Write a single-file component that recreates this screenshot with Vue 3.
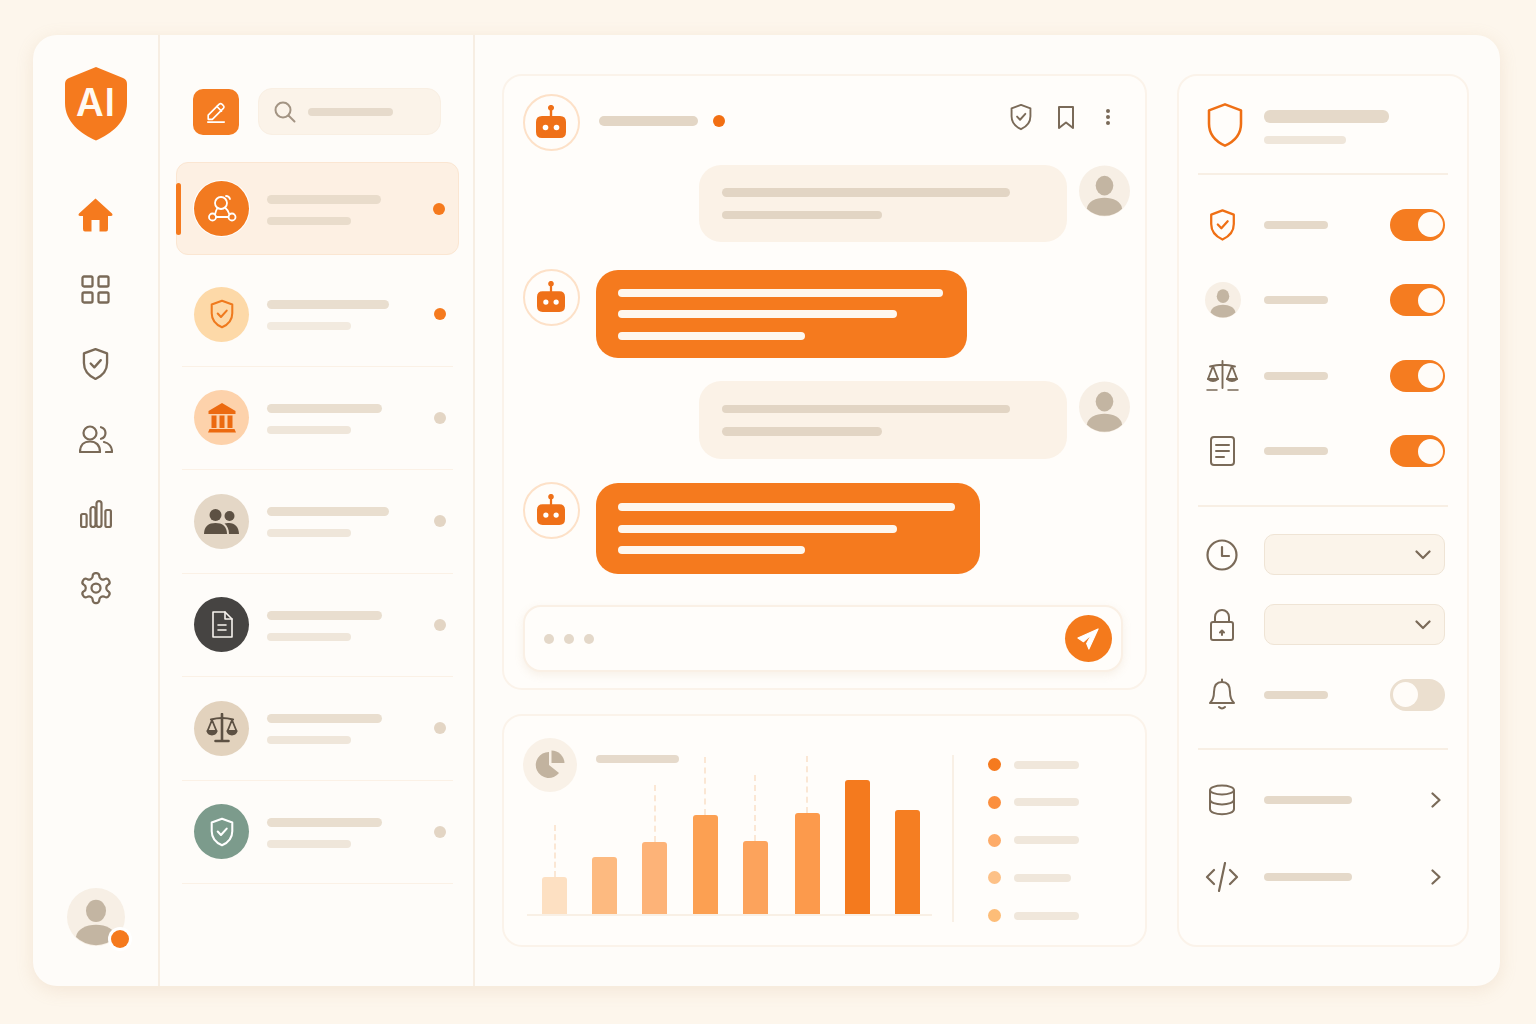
<script setup>
const navIcons = [
  { name: 'home', w: 35, h: 34 },
  { name: 'grid', w: 30, h: 30 },
  { name: 'shield-check', w: 27, h: 34 },
  { name: 'users', w: 34, h: 28 },
  { name: 'bars', w: 32, h: 28 },
  { name: 'gear', w: 36, h: 36 },
]

const conversations = [
  { icon: 'shield-check', w: 24, h: 30, bg: '#fdd9a8', color: '#ef7a1e', first: 122, dot: '#f57a1e', light: true },
  { icon: 'bank', w: 28, h: 30, bg: '#fdd2ab', color: '#ec6a10', first: 115, dot: '#e3d5c4', light: false },
  { icon: 'group', w: 35, h: 27, bg: '#e4d7c6', color: '#5d5143', first: 122, dot: '#e3d5c4', light: false },
  { icon: 'doc', w: 22, h: 27, bg: '#464442', color: '#f7f3ee', first: 115, dot: '#e3d5c4', light: false },
  { icon: 'scales', w: 32, h: 30, bg: '#e2d2bd', color: '#5d5143', first: 115, dot: '#e3d5c4', light: false },
  { icon: 'shield-check', w: 24, h: 30, bg: '#7c9b8c', color: '#ffffff', first: 115, dot: '#e3d5c4', light: false },
]

const messages = [
  { from: 'user', top: 14, h: 77, lines: [288, 160] },
  { from: 'bot', top: 28, h: 88, w: 371, lines: [325, 279, 187] },
  { from: 'user', top: 23, h: 78, lines: [288, 160] },
  { from: 'bot', top: 24, h: 91, w: 384, lines: [337, 279, 187] },
]

const bars = [
  { h: 37, color: '#fde0c2', dash: 52 },
  { h: 57, color: '#fdba80', dash: 0 },
  { h: 72, color: '#fdb378', dash: 57 },
  { h: 99, color: '#fca052', dash: 58 },
  { h: 73, color: '#fca35c', dash: 66 },
  { h: 101, color: '#fc9a4c', dash: 57 },
  { h: 134, color: '#f47a1e', dash: 0 },
  { h: 104, color: '#f57e22', dash: 0 },
]

const legend = [
  { color: '#f57a1e', w: 65 },
  { color: '#fb8f3e', w: 65 },
  { color: '#fdab68', w: 65 },
  { color: '#fdc187', w: 57 },
  { color: '#fdbd78', w: 65 },
]

const toggles = [
  { icon: 'shield-check', w: 27, h: 32, color: '#ef6f14' },
  { icon: 'person', w: 36, h: 36, color: '#7a6a58' },
  { icon: 'scales-thin', w: 33, h: 32, color: '#7a6a58' },
  { icon: 'doc-lines', w: 25, h: 30, color: '#7a6a58' },
]

const links = [
  { icon: 'database', w: 28, h: 32 },
  { icon: 'code', w: 34, h: 30 },
]
</script>

<template>
  <svg class="defs" aria-hidden="true">
    <symbol id="i-home" viewBox="0 0 35 34">
      <path fill="currentColor" d="M17.5 .5 34 15.5Q35.5 18 32.5 18H30V31Q30 33.5 28 33.5H21.5V22H13.5V33.5H7Q5 33.5 5 31V18H2.5Q-.5 18 1 15.5Z" />
    </symbol>
    <symbol id="i-grid" viewBox="0 0 30 30">
      <g fill="none" stroke="currentColor" stroke-width="2.3">
        <rect x="1.5" y="1.5" width="10" height="10" rx="1.5" />
        <rect x="17.5" y="1.5" width="10" height="10" rx="1.5" />
        <rect x="1.5" y="17.5" width="10" height="10" rx="1.5" />
        <rect x="17.5" y="17.5" width="10" height="10" rx="1.5" />
      </g>
    </symbol>
    <symbol id="i-shield-check" viewBox="0 0 28 34">
      <g fill="none" stroke="currentColor" stroke-width="2.4" stroke-linejoin="round" stroke-linecap="round">
        <path d="M14 1.5 26 6V16C26 24 20.5 29.5 14 32.5 7.5 29.5 2 24 2 16V6Z" />
        <path d="M9 16.5 12.8 20.5 19.5 13" />
      </g>
    </symbol>
    <symbol id="i-shield" viewBox="1 .5 26 33">
      <path fill="none" stroke="currentColor" stroke-width="1.9" stroke-linejoin="round" d="M14 1.5 26 6V16C26 24 20.5 29.5 14 32.5 7.5 29.5 2 24 2 16V6Z" />
    </symbol>
    <symbol id="i-users" viewBox="0 0 34 28">
      <g fill="none" stroke="currentColor" stroke-width="2.2" stroke-linecap="round" stroke-linejoin="round">
        <circle cx="11" cy="8" r="6.5" />
        <path d="M1 27C1 20 5 16.5 11 16.5S21 20 21 27Z" />
        <path d="M22 2.2A6 6 0 0 1 22 13.8" />
        <path d="M25 17C30 18 33 22 33 27H27" />
      </g>
    </symbol>
    <symbol id="i-bars" viewBox="0 0 32 28">
      <g fill="none" stroke="currentColor" stroke-width="2.2">
        <rect x="1.1" y="14" width="5.5" height="13" rx="1.5" />
        <rect x="10.5" y="7" width="5" height="20" rx="2.5" />
        <rect x="16.5" y="1.1" width="5" height="25.9" rx="2.5" />
        <rect x="25.4" y="10" width="5.5" height="17" rx="1.5" />
      </g>
    </symbol>
    <symbol id="i-gear" viewBox="0 0 24 24">
      <g fill="none" stroke="currentColor" stroke-width="1.5" stroke-linejoin="round">
        <path d="M12.22 2h-.44a2 2 0 0 0-2 2v.18a2 2 0 0 1-1 1.73l-.43.25a2 2 0 0 1-2 0l-.15-.08a2 2 0 0 0-2.73.73l-.22.38a2 2 0 0 0 .73 2.73l.15.1a2 2 0 0 1 1 1.72v.51a2 2 0 0 1-1 1.74l-.15.09a2 2 0 0 0-.73 2.73l.22.38a2 2 0 0 0 2.73.73l.15-.08a2 2 0 0 1 2 0l.43.25a2 2 0 0 1 1 1.73V20a2 2 0 0 0 2 2h.44a2 2 0 0 0 2-2v-.18a2 2 0 0 1 1-1.73l.43-.25a2 2 0 0 1 2 0l.15.08a2 2 0 0 0 2.73-.73l.22-.39a2 2 0 0 0-.73-2.73l-.15-.08a2 2 0 0 1-1-1.74v-.5a2 2 0 0 1 1-1.74l.15-.09a2 2 0 0 0 .73-2.73l-.22-.38a2 2 0 0 0-2.73-.73l-.15.08a2 2 0 0 1-2 0l-.43-.25a2 2 0 0 1-1-1.73V4a2 2 0 0 0-2-2z" />
        <circle cx="12" cy="12" r="3" />
      </g>
    </symbol>
    <symbol id="i-bot" viewBox="0 0 30 33">
      <path fill="currentColor" d="M6 11H13.8V5.6A3 3 0 1 1 16.2 5.6V11H24Q30 11 30 17V27Q30 33 24 33H6Q0 33 0 27V17Q0 11 6 11Z" />
      <circle cx="9.5" cy="22.5" r="2.8" fill="#fff" />
      <circle cx="20.5" cy="22.5" r="2.8" fill="#fff" />
    </symbol>
    <symbol id="i-person" viewBox="0 0 52 52">
      <circle cx="26" cy="26" r="26" fill="#f7efe5" />
      <ellipse cx="26" cy="20.5" rx="9" ry="10" fill="#c3b5a2" />
      <path fill="#c3b5a2" d="M8 44C9 37 17 33 26 33S43 37 44 44A26 26 0 0 1 8 44Z" />
    </symbol>
    <symbol id="i-bank" viewBox="0 0 28 30">
      <path fill="currentColor" d="M14 0 27.5 8V11H.5V8ZM3.500 12.500H8.500V25H3.500ZM11.500 12.500H16.500V25H11.500ZM19.500 12.500H24.500V25H19.500ZM1.500 26H26.500L28 29.500H0Z" />
    </symbol>
    <symbol id="i-group" viewBox="0 0 35 27">
      <g fill="currentColor">
        <circle cx="11.5" cy="7" r="6" />
        <path d="M0 26C0 18 5 15 11.5 15S23 18 23 26Z" />
        <circle cx="25.5" cy="8" r="5" />
        <path d="M24 15C30.5 14.5 35 19 35 26H25C25 21 23 17.5 20.5 15.5Q22 15 24 15Z" />
      </g>
    </symbol>
    <symbol id="i-doc" viewBox="0 0 22 27">
      <g fill="none" stroke="currentColor" stroke-width="1.6" stroke-linejoin="round" stroke-linecap="round">
        <path d="M2 1H14L21 8V26H2Z" />
        <path d="M14 1V8H21" />
        <path d="M7 14H15M7 19H15" />
      </g>
    </symbol>
    <symbol id="i-doc-lines" viewBox="0 0 25 30">
      <g fill="none" stroke="currentColor" stroke-width="2" stroke-linecap="round">
        <rect x="1" y="1" width="23" height="28" rx="3" />
        <path d="M6 9H19M6 15H19M6 21H14" />
      </g>
    </symbol>
    <symbol id="i-scales" viewBox="0 0 32 30">
      <g fill="none" stroke="currentColor" stroke-width="1.8" stroke-linecap="round" stroke-linejoin="round">
        <path d="M16 1V27.500M9.500 28H22.500" stroke-width="2.600" />
        <path d="M5 6.500Q16 3.500 27 6.500" stroke-width="2.200" />
        <path d="M6 7 1.500 18H10.500ZM26 7 21.500 18H30.500Z" />
      </g>
      <path fill="currentColor" d="M.5 17.500H11.500C11 24 1 24 .5 17.500ZM20.500 17.500H31.500C31 24 21 24 20.500 17.500Z" />
    </symbol>
    <symbol id="i-scales-thin" viewBox="0 0 33 32">
      <g fill="none" stroke="currentColor" stroke-width="1.9" stroke-linecap="round" stroke-linejoin="round">
        <path d="M16.5 1V28M4 6.500Q16.500 3 29 6.500" />
        <path d="M7 6 2 19H12ZM26 6 21 19H31Z" />
        <path d="M2 19Q7 23 12 19M21 19Q26 23 31 19" />
        <path d="M1 30H11M22 30H32" stroke-width="1.500" />
      </g>
    </symbol>
    <symbol id="i-clock" viewBox="0 0 32 32">
      <g fill="none" stroke="currentColor" stroke-width="2.2" stroke-linecap="round" stroke-linejoin="round">
        <circle cx="16" cy="16" r="14.500" />
        <path d="M16 8V17H23" />
      </g>
    </symbol>
    <symbol id="i-lock" viewBox="0 0 26 33">
      <g fill="none" stroke="currentColor" stroke-width="2" stroke-linecap="round" stroke-linejoin="round">
        <rect x="2" y="14" width="22" height="18" rx="2" />
        <path d="M6 14V9A7 7 0 0 1 20 9V14" />
        <path d="M13 27V22.500M11 24.500 13 22.500 15 24.500" />
      </g>
    </symbol>
    <symbol id="i-bell" viewBox="0 0 28 33">
      <g fill="none" stroke="currentColor" stroke-width="2" stroke-linecap="round" stroke-linejoin="round">
        <path d="M14 1.500V4M14 4C8 4 6 9 6 14 6 19 5 22 2 25H26C23 22 22 19 22 14 22 9 20 4 14 4Z" />
        <path d="M11 29Q14 32 17 29" />
      </g>
    </symbol>
    <symbol id="i-database" viewBox="0 0 28 32">
      <g fill="none" stroke="currentColor" stroke-width="2">
        <ellipse cx="14" cy="6" rx="12" ry="4.500" />
        <path d="M2 6V25C2 32 26 32 26 25V6M2 15.500C2 22 26 22 26 15.500" />
      </g>
    </symbol>
    <symbol id="i-code" viewBox="0 0 34 30">
      <g fill="none" stroke="currentColor" stroke-width="2.2" stroke-linecap="round" stroke-linejoin="round">
        <path d="M9 8 2 15 9 22M25 8 32 15 25 22M20 1 14 29" />
      </g>
    </symbol>
    <symbol id="i-chev-right" viewBox="0 0 10 16">
      <path fill="none" stroke="currentColor" stroke-width="2.2" stroke-linecap="round" stroke-linejoin="round" d="M1.500 1.500 8.500 8 1.500 14.500" />
    </symbol>
    <symbol id="i-chev-down" viewBox="0 0 16 10">
      <path fill="none" stroke="currentColor" stroke-width="2.2" stroke-linecap="round" stroke-linejoin="round" d="M1.500 1.500 8 8 14.500 1.500" />
    </symbol>
  </svg>

  <div class="page">
    <div class="window">
      <nav class="rail">
        <svg class="logo" width="64" height="74" viewBox="0 0 64 74">
          <path fill="#f57a1e" d="M32 0 59 11Q63 12.500 63 17V36C63 55 47 67 32 73.500 17 67 1 55 1 36V17Q1 12.500 5 11Z" />
          <text x="32" y="49" text-anchor="middle" class="logo-text">AI</text>
        </svg>
        <div class="nav">
          <div v-for="(n, i) in navIcons" :key="n.name" class="nav-item" :class="{ on: i === 0 }">
            <svg :width="n.w" :height="n.h"><use :href="'#i-' + n.name" /></svg>
          </div>
        </div>
        <div class="me">
          <svg width="58" height="58"><use href="#i-person" /></svg>
          <span class="me-dot"></span>
        </div>
      </nav>

      <section class="list">
        <div class="list-top">
          <button class="compose">
            <svg width="22" height="24" viewBox="0 0 24 24" fill="none" stroke="#fff" stroke-width="1.8" stroke-linejoin="round" stroke-linecap="round">
              <path d="M15.500 3.500a2 2 0 0 1 3 0l1.500 1.500a2 2 0 0 1 0 3L8 20H3.500v-4.500Z" />
              <path d="M13 6l5 5M3 23H21" />
            </svg>
          </button>
          <div class="search">
            <svg width="22" height="22" viewBox="0 0 22 22" fill="none" stroke="#a39483" stroke-width="2" stroke-linecap="round">
              <circle cx="9" cy="9" r="7.500" />
              <path d="M14.500 14.500 20.500 20.500" />
            </svg>
            <span class="pill search-line"></span>
          </div>
        </div>

        <div class="active">
          <span class="accent"></span>
          <div class="avatar ringed">
            <svg width="54" height="54" viewBox="0 0 54 54" fill="none" stroke="#fff" stroke-width="1.8" stroke-linecap="round">
              <circle cx="26" cy="21" r="6" />
              <path d="M31 14Q34 14 35 17" />
              <circle cx="17.500" cy="35" r="3.500" />
              <circle cx="37" cy="35" r="3.500" />
              <path d="M21 35H33.500M20 32.500Q21 28 22.500 26M34.500 32.500Q33 28 30 25.500" />
            </svg>
          </div>
          <div class="texts shifted">
            <span class="pill t1 w114"></span>
            <span class="pill t2"></span>
          </div>
          <span class="row-dot hot"></span>
        </div>

        <div v-for="(c, i) in conversations" :key="i" class="row">
          <div class="avatar" :style="{ background: c.bg, color: c.color }">
            <svg :width="c.w" :height="c.h"><use :href="'#i-' + c.icon" /></svg>
          </div>
          <div class="texts">
            <span class="pill t1" :style="{ width: c.first + 'px' }"></span>
            <span class="pill t2" :class="{ pale: c.light }"></span>
          </div>
          <span class="row-dot" :style="{ background: c.dot }"></span>
        </div>
      </section>

      <main class="main">
        <div class="center">
          <section class="card chat">
            <header class="chat-head">
              <div class="bot-ring"><svg width="30" height="33"><use href="#i-bot" /></svg></div>
              <span class="pill chat-title"></span>
              <span class="live"></span>
              <div class="head-tools">
                <svg width="22" height="28"><use href="#i-shield-check" /></svg>
                <svg width="18" height="24" viewBox="0 0 18 24"><path fill="none" stroke="currentColor" stroke-width="2" stroke-linejoin="round" d="M2 2H16V23L9 17.500 2 23Z" /></svg>
                <svg width="4" height="16" viewBox="0 0 4 16" fill="currentColor">
                  <circle cx="2" cy="2" r="2" /><circle cx="2" cy="8" r="2" /><circle cx="2" cy="14" r="2" />
                </svg>
              </div>
            </header>

            <div v-for="(m, i) in messages" :key="i" class="msg" :class="m.from" :style="{ marginTop: m.top + 'px' }">
              <template v-if="m.from === 'bot'">
                <div class="bot-ring small"><svg width="28" height="31"><use href="#i-bot" /></svg></div>
                <div class="bubble bot-bubble" :style="{ width: m.w + 'px', height: m.h + 'px' }">
                  <span v-for="l in m.lines" :key="l" class="pill white" :style="{ width: l + 'px' }"></span>
                </div>
              </template>
              <template v-else>
                <div class="bubble user-bubble" :style="{ height: m.h + 'px' }">
                  <span v-for="l in m.lines" :key="l" class="pill tan" :style="{ width: l + 'px' }"></span>
                </div>
                <svg class="user-pic" width="51" height="52"><use href="#i-person" /></svg>
              </template>
            </div>

            <div class="composer">
              <span class="typing"></span><span class="typing"></span><span class="typing"></span>
              <button class="send">
                <svg width="22" height="22" viewBox="-1 -1 24 24" fill="#fff" stroke="#fff" stroke-width="1.2" stroke-linejoin="round">
                  <path d="M22 0 0 10 6 14 15 6 9.500 16 12 22Z" />
                </svg>
              </button>
            </div>
          </section>

          <section class="card stats">
            <div class="plot-area">
              <div class="stats-head">
                <div class="pie">
                  <svg width="54" height="54" viewBox="0 0 54 54" fill="#c2b39f">
                    <path d="M28.500 12.500A13 13 0 0 1 41.500 25H28.500Z" />
                    <path d="M26 14V27L36 35A13 13 0 1 1 26 14Z" />
                  </svg>
                </div>
                <span class="pill stats-title"></span>
              </div>
              <div class="plot">
                <div v-for="(b, i) in bars" :key="i" class="col">
                  <i v-if="b.dash" class="dash" :style="{ height: b.dash + 'px' }"></i>
                  <div class="bar" :style="{ height: b.h + 'px', background: b.color }"></div>
                </div>
              </div>
            </div>
            <div class="stats-rule"></div>
            <ul class="legend">
              <li v-for="(l, i) in legend" :key="i">
                <span class="legend-dot" :style="{ background: l.color }"></span>
                <span class="pill legend-line" :style="{ width: l.w + 'px' }"></span>
              </li>
            </ul>
          </section>
        </div>

        <aside class="card side">
          <header class="side-head">
            <svg class="side-shield" width="36" height="44"><use href="#i-shield" /></svg>
            <div class="side-titles">
              <span class="pill side-t1"></span>
              <span class="pill side-t2"></span>
            </div>
          </header>

          <div class="group toggles">
            <div v-for="t in toggles" :key="t.icon" class="opt">
              <svg :width="t.w" :height="t.h" :style="{ color: t.color }"><use :href="'#i-' + t.icon" /></svg>
              <span class="pill opt-line"></span>
              <span class="toggle"><span class="knob"></span></span>
            </div>
          </div>

          <div class="group selects">
            <div class="opt">
              <svg width="32" height="32"><use href="#i-clock" /></svg>
              <div class="select"><svg width="16" height="10"><use href="#i-chev-down" /></svg></div>
            </div>
            <div class="opt">
              <svg width="26" height="33"><use href="#i-lock" /></svg>
              <div class="select"><svg width="16" height="10"><use href="#i-chev-down" /></svg></div>
            </div>
            <div class="opt">
              <svg width="28" height="33"><use href="#i-bell" /></svg>
              <span class="pill opt-line"></span>
              <span class="toggle off"><span class="knob"></span></span>
            </div>
          </div>

          <div class="group links">
            <div v-for="l in links" :key="l.icon" class="opt link">
              <svg :width="l.w" :height="l.h"><use :href="'#i-' + l.icon" /></svg>
              <span class="pill link-line"></span>
              <svg class="chev" width="10" height="16"><use href="#i-chev-right" /></svg>
            </div>
          </div>
        </aside>
      </main>
    </div>
  </div>
</template>

<style>
html, body {
  margin: 0;
  background: #fdf6ec;
  overflow: hidden;
}
</style>

<style scoped>
.defs {
  position: absolute;
  width: 0;
  height: 0;
}
.page {
  box-sizing: border-box;
  width: 1536px;
  height: 1024px;
  padding: 35px 36px 38px 33px;
  background: #fdf6ec;
  font-family: "Inter", "Liberation Sans", sans-serif;
}
.window {
  display: flex;
  height: 951px;
  border-radius: 24px;
  background: #fefcf9;
  box-shadow: 0 4px 18px rgba(190, 150, 100, 0.16);
}
.pill {
  display: block;
  border-radius: 6px;
}
svg {
  display: block;
  flex: none;
}

/* left rail */
.rail {
  box-sizing: border-box;
  width: 127px;
  flex: none;
  display: flex;
  flex-direction: column;
  align-items: center;
  padding: 32px 0 40px;
  border-right: 2px solid #f7eee3;
}
.logo-text {
  fill: #fff9f1;
  font-family: "Inter", "Liberation Sans", sans-serif;
  font-size: 38px;
  font-weight: 600;
  letter-spacing: 1px;
}
.nav {
  margin-top: 37px;
}
.nav-item {
  height: 74.6px;
  display: flex;
  align-items: center;
  justify-content: center;
  color: #7a6a58;
}
.nav-item.on {
  color: #f57a1e;
}
.me {
  position: relative;
  margin-top: auto;
}
.me-dot {
  position: absolute;
  right: -4px;
  bottom: -2px;
  width: 18px;
  height: 18px;
  border-radius: 50%;
  background: #f57a1e;
  box-shadow: 0 0 0 3px #fff;
}

/* conversation list */
.list {
  box-sizing: border-box;
  width: 315px;
  flex: none;
  padding: 53px 14px 0 16px;
  border-right: 2px solid #f7eee3;
}
.list-top {
  display: flex;
  align-items: center;
  gap: 19px;
  padding-left: 17px;
  height: 47px;
  margin-bottom: 27px;
}
.compose {
  width: 46px;
  height: 46px;
  padding: 0;
  border: none;
  border-radius: 10px;
  background: #f47c22;
  display: flex;
  align-items: center;
  justify-content: center;
}
.search {
  box-sizing: border-box;
  width: 183px;
  height: 47px;
  display: flex;
  align-items: center;
  gap: 12px;
  padding-left: 15px;
  border-radius: 14px;
  background: #fbf3e9;
  border: 1px solid #f9efe3;
}
.search-line {
  width: 85px;
  height: 8px;
  background: #e6dacb;
}
.active {
  position: relative;
  box-sizing: border-box;
  height: 93px;
  display: flex;
  align-items: center;
  padding: 0 13px 0 17px;
  margin-bottom: 8px;
  border-radius: 12px;
  background: #fdf0e3;
  border: 1px solid #fbe6d2;
}
.accent {
  position: absolute;
  left: -1px;
  top: 20px;
  width: 5px;
  height: 52px;
  border-radius: 3px;
  background: #f57a1e;
}
.row {
  box-sizing: border-box;
  height: 103.5px;
  display: flex;
  align-items: center;
  margin: 0 6px;
  padding: 0 7.5px 0 12px;
  border-bottom: 1.5px solid #fbf1e6;
}
.avatar {
  width: 55px;
  height: 55px;
  flex: none;
  border-radius: 50%;
  display: flex;
  align-items: center;
  justify-content: center;
}
.ringed {
  background: #f27a20;
  box-shadow: 0 0 0 1px #fff;
}
.texts {
  flex: 1;
  display: flex;
  flex-direction: column;
  gap: 13px;
  margin: 2px 0 0 18px;
}
.texts.shifted {
  margin-top: 3px;
}
.t1 {
  height: 9px;
  background: #e9decf;
}
.w114 {
  width: 114px;
}
.t2 {
  width: 84px;
  height: 8px;
  background: #efe6da;
}
.active .t1, .active .t2 {
  background: #e9dccb;
}
.t2.pale {
  background: #f2eadf;
}
.row-dot {
  width: 12px;
  height: 12px;
  flex: none;
  border-radius: 50%;
}
.hot {
  background: #f57a1e;
}

/* main */
.main {
  flex: 1;
  min-width: 0;
  display: flex;
  gap: 30px;
  padding: 39px 31px 39px 27px;
}
.center {
  width: 645px;
  flex: none;
  display: flex;
  flex-direction: column;
  gap: 24px;
}
.card {
  box-sizing: border-box;
  border: 2px solid #fbf3ea;
  border-radius: 20px;
  background: #fffdfa;
}

/* chat */
.chat {
  height: 616px;
  flex: none;
}
.chat-head {
  display: flex;
  align-items: center;
  padding: 18px 35px 0 19px;
}
.bot-ring {
  box-sizing: border-box;
  width: 57px;
  height: 57px;
  flex: none;
  border-radius: 50%;
  border: 2px solid #fde1c8;
  background: #fffdfa;
  color: #ef7018;
  display: flex;
  align-items: center;
  justify-content: center;
}
.bot-ring svg {
  margin: -2px 1px 0 0;
}
.chat-title {
  width: 99px;
  height: 10px;
  margin-left: 19px;
  margin-bottom: 4px;
  background: #e3d6c5;
}
.live {
  width: 12px;
  height: 12px;
  margin-left: 15px;
  margin-bottom: 4px;
  border-radius: 50%;
  background: #f26f12;
}
.head-tools {
  margin-left: auto;
  margin-bottom: 12px;
  display: flex;
  align-items: center;
  gap: 25px;
  color: #7a6a58;
}
.head-tools svg:last-child {
  margin-left: 6px;
}
.msg {
  display: flex;
  align-items: flex-start;
}
.msg.user {
  justify-content: flex-end;
  gap: 12px;
  padding-right: 15px;
}
.msg.bot {
  gap: 16px;
  padding-left: 19px;
}
.msg.bot .bot-ring {
  margin-top: -1px;
}
.bubble {
  box-sizing: border-box;
  display: flex;
  flex-direction: column;
  justify-content: center;
  padding-left: 23px;
  border-radius: 22px;
}
.user-bubble {
  width: 368px;
  gap: 14px;
  background: #fbf2e7;
}
.bot-bubble {
  gap: 13.5px;
  padding-left: 22px;
  background: #f57a1e;
}
.white {
  height: 8px;
  background: #fef7ee;
}
.tan {
  height: 8.5px;
  background: #e2d5c4;
}
.composer {
  box-sizing: border-box;
  width: 600px;
  height: 67px;
  margin: 31px 0 0 19px;
  padding: 0 9.5px 0 19px;
  display: flex;
  align-items: center;
  gap: 10px;
  border: 2px solid #faf0e5;
  border-radius: 18px;
  background: #fffdfa;
  box-shadow: 0 3px 8px rgba(200, 165, 120, 0.14);
}
.typing {
  width: 10px;
  height: 10px;
  border-radius: 50%;
  background: #e4d8c9;
}
.send {
  width: 47px;
  height: 47px;
  margin-left: auto;
  padding: 0;
  border: none;
  border-radius: 50%;
  background: #f47a1c;
  display: flex;
  align-items: center;
  justify-content: center;
}

/* stats */
.stats {
  flex: 1;
  display: flex;
  align-items: flex-start;
  padding: 22px 0 0 19px;
}
.plot-area {
  display: grid;
  width: 409px;
  flex: none;
}
.stats-head, .plot {
  grid-area: 1 / 1;
}
.stats-head {
  display: flex;
  align-items: flex-start;
  gap: 19px;
}
.pie {
  width: 54px;
  height: 54px;
  border-radius: 50%;
  background: #f9f1e7;
}
.stats-title {
  width: 83px;
  height: 8px;
  margin-top: 17px;
  background: #e6dacb;
}
.plot {
  box-sizing: border-box;
  height: 177.5px;
  margin-left: 4px;
  padding-left: 15px;
  display: flex;
  align-items: flex-end;
  gap: 25.2px;
  border-bottom: 2px solid #f9f0e5;
}
.col {
  width: 25px;
  display: flex;
  flex-direction: column;
  align-items: center;
}
.col:nth-child(6) {
  margin-left: 1.7px;
}
.dash {
  width: 0;
  border-left: 2px dashed #fbe7d4;
}
.bar {
  width: 25px;
  border-radius: 3px 3px 0 0;
  align-self: stretch;
}
.stats-rule {
  width: 2px;
  height: 167px;
  flex: none;
  margin: 17px 0 0 20px;
  background: #f9f0e5;
}
.legend {
  margin: 7.7px 0 0 34px;
  padding: 0;
  list-style: none;
}
.legend li {
  height: 37.75px;
  display: flex;
  align-items: center;
  gap: 13px;
}
.legend-dot {
  width: 13px;
  height: 13px;
  border-radius: 50%;
}
.legend-line {
  height: 8px;
  background: #f0e7db;
}

/* settings panel */
.side {
  flex: 1;
  padding: 0 19px;
}
.side-head {
  box-sizing: border-box;
  height: 99px;
  display: flex;
  align-items: center;
  padding-left: 9px;
  gap: 21px;
  border-bottom: 2px solid #f8efe4;
}
.side-shield {
  color: #ef6f14;
}
.side-titles {
  display: flex;
  flex-direction: column;
  gap: 13px;
  margin-top: 5px;
}
.side-t1 {
  width: 125px;
  height: 13px;
  background: #e5d9c9;
}
.side-t2 {
  width: 82px;
  height: 8px;
  background: #efe6da;
}
.group {
  border-bottom: 2px solid #f8efe4;
}
.toggles {
  padding: 12px 0 16px;
}
.toggles .opt {
  height: 75.5px;
}
.selects {
  padding: 12.5px 0 18.5px;
}
.selects .opt {
  height: 70px;
  grid-template-columns: 47px 1fr auto;
  column-gap: 19px;
}
.links {
  padding-top: 12px;
  border-bottom: none;
}
.links .opt {
  height: 76.5px;
  grid-template-columns: 47px 1fr auto;
  column-gap: 19px;
}
.opt {
  display: grid;
  grid-template-columns: 49px 1fr auto;
  align-items: center;
  column-gap: 17px;
  padding-right: 3px;
  color: #7a6a58;
}
.opt > svg:first-child {
  justify-self: center;
}
.opt-line {
  width: 64px;
  height: 8px;
  background: #e5d9c9;
}
.toggle {
  box-sizing: border-box;
  width: 55px;
  height: 32px;
  padding: 3.5px 2.5px;
  display: flex;
  justify-content: flex-end;
  border-radius: 16px;
  background: #f57c20;
}
.toggle.off {
  justify-content: flex-start;
  background: #ebdfcf;
}
.knob {
  width: 25px;
  height: 25px;
  border-radius: 50%;
  background: #fffcf8;
}
.select {
  grid-column: 2 / 4;
  box-sizing: border-box;
  height: 41px;
  display: flex;
  align-items: center;
  justify-content: flex-end;
  padding-right: 13px;
  border: 1.5px solid #efe4d5;
  border-radius: 10px;
  background: #fbf4ea;
}
.link-line {
  width: 88px;
  height: 8px;
  background: #e5d9c9;
}
.chev {
  margin-right: 4px;
}
</style>
